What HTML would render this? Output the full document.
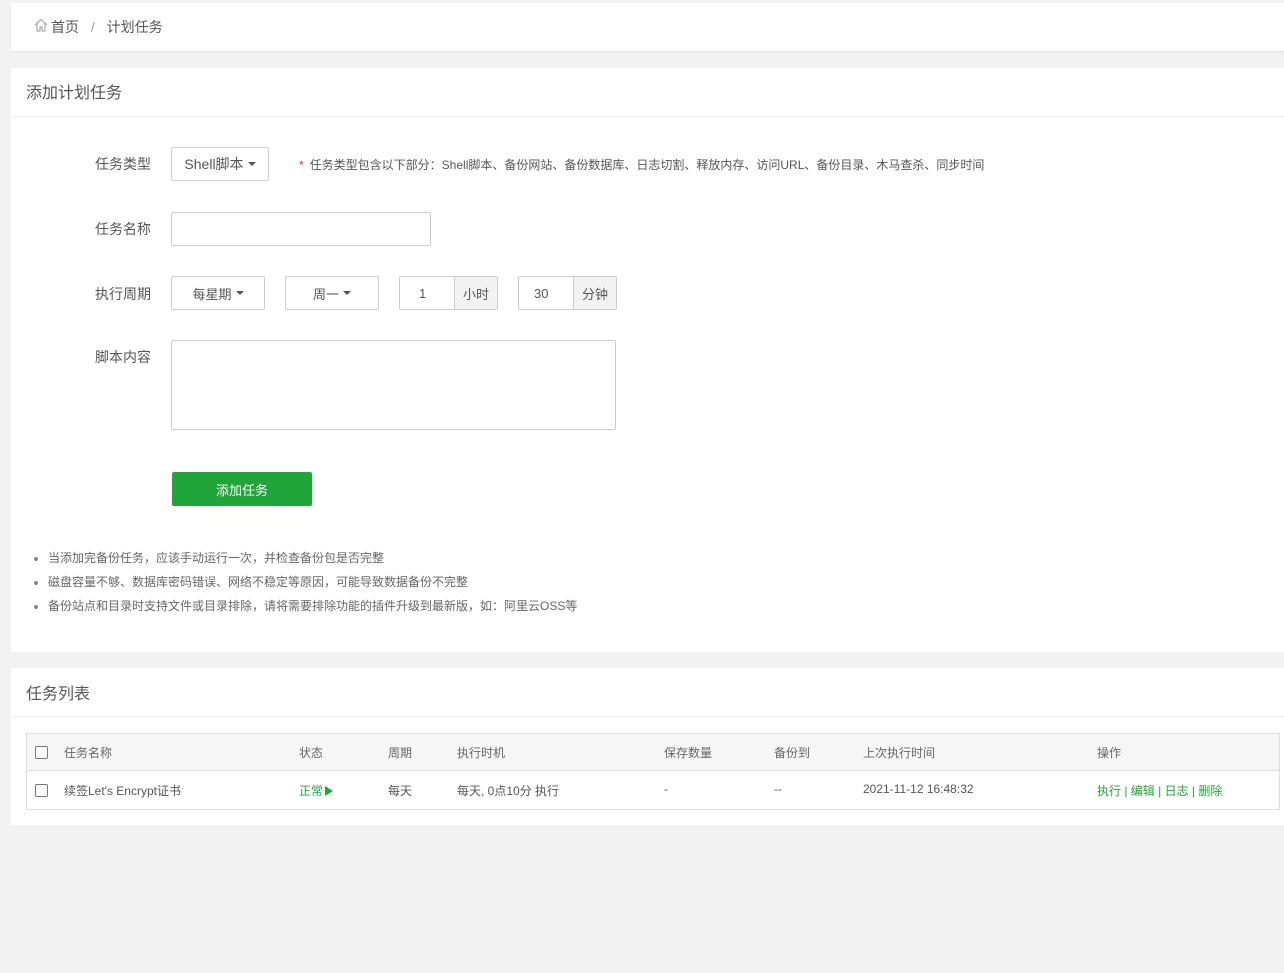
<!DOCTYPE html>
<html><head><meta charset="utf-8"><style>
*{box-sizing:border-box;margin:0;padding:0}
body{width:1284px;height:973px;background:#f2f2f2;font-family:"Liberation Sans","Noto Sans CJK SC",sans-serif;color:#555;position:relative;overflow:hidden;font-size:13px}
.a{position:absolute}
.card{position:absolute;left:11px;right:0;background:#fff}
.box{position:absolute;border:1px solid #ccc;border-radius:2px;background:#fff;display:flex;align-items:center;justify-content:center;font-size:13px;color:#555}
.caret{display:inline-block;width:0;height:0;border-left:4px solid transparent;border-right:4px solid transparent;border-top:4px solid #555;margin-left:4px;vertical-align:middle}
.lbl{position:absolute;left:95px;font-size:14px;color:#555}
.addon{background:#f2f2f2;border-left:1px solid #ccc}
li{list-style:none;position:relative;padding-left:22px;height:24px;line-height:24px;font-size:12px;color:#666}
li:before{content:"";position:absolute;left:8px;top:11px;width:4px;height:4px;border-radius:50%;background:#888}
.th{position:absolute;top:744px;font-size:12px;color:#666}
.td{position:absolute;top:782px;font-size:12px;color:#555}
.cb{position:absolute;left:35px;width:13px;height:13px;border:1px solid #777;border-radius:2px;background:#fff}
.g{color:#20a53a}
</style></head><body>
<div class="card" style="top:3px;height:48px;box-shadow:0 1px 2px rgba(0,0,0,.08)">
<svg class="a" style="left:23px;top:15px" width="14" height="14" viewBox="0 0 14 14" fill="none" stroke="#999" stroke-width="1"><path d="M1 7 7 1.5 13 7M3 5.5V13h3V9h2v4h3V5.5"/></svg>
<div class="a" style="left:40px;top:14px;font-size:14px;color:#555">首页 <span style="margin:0 8px;color:#999">/</span> 计划任务</div>
</div>
<div class="card" style="top:68px;height:584px">
<div class="a" style="left:0;right:0;top:0;height:49px;border-bottom:1px solid #eee"></div>
<div class="a" style="left:15px;top:11px;font-size:16px;color:#555">添加计划任务</div>
</div>
<div class="lbl" style="top:154px">任务类型</div>
<div class="box" style="left:171px;top:147px;width:98px;height:34px;font-size:14px">Shell脚本<span class="caret"></span></div>
<div class="a" style="left:299px;top:156px;font-size:12px;color:#555"><span style="color:#e33;margin-right:6px">*</span>任务类型包含以下部分：Shell脚本、备份网站、备份数据库、日志切割、释放内存、访问URL、备份目录、木马查杀、同步时间</div>
<div class="lbl" style="top:219px">任务名称</div>
<div class="box" style="left:171px;top:212px;width:260px;height:34px"></div>
<div class="lbl" style="top:284px">执行周期</div>
<div class="box" style="left:171px;top:276px;width:94px;height:34px">每星期<span class="caret"></span></div>
<div class="box" style="left:285px;top:276px;width:94px;height:34px">周一<span class="caret"></span></div>
<div class="box" style="left:399px;top:276px;width:99px;height:34px;justify-content:flex-start"><span style="width:54px;padding-left:19px">1</span><span class="addon" style="flex:1;height:100%;display:flex;align-items:center;justify-content:center">小时</span></div>
<div class="box" style="left:518px;top:276px;width:99px;height:34px;justify-content:flex-start"><span style="width:54px;padding-left:15px">30</span><span class="addon" style="flex:1;height:100%;display:flex;align-items:center;justify-content:center">分钟</span></div>
<div class="lbl" style="top:347px">脚本内容</div>
<div class="box" style="left:171px;top:340px;width:445px;height:90px"></div>
<div class="a" style="left:172px;top:472px;width:140px;height:34px;background:#20a53a;border-radius:2px;color:#fff;font-size:13px;display:flex;align-items:center;justify-content:center">添加任务</div>
<ul class="a" style="left:26px;top:546px">
<li>当添加完备份任务，应该手动运行一次，并检查备份包是否完整</li>
<li>磁盘容量不够、数据库密码错误、网络不稳定等原因，可能导致数据备份不完整</li>
<li>备份站点和目录时支持文件或目录排除，请将需要排除功能的插件升级到最新版，如：阿里云OSS等</li>
</ul>
<div class="card" style="top:668px;height:157px">
<div class="a" style="left:0;right:0;top:0;height:49px;border-bottom:1px solid #eee"></div>
<div class="a" style="left:15px;top:12px;font-size:16px;color:#555">任务列表</div>
</div>
<div class="a" style="left:26px;top:733px;width:1254px;height:77px;border:1px solid #ddd"></div>
<div class="a" style="left:27px;top:734px;width:1252px;height:37px;background:#f6f6f6;border-bottom:1px solid #ddd"></div>
<div class="cb" style="top:746px"></div>
<div class="th" style="left:64px">任务名称</div><div class="th" style="left:299px">状态</div><div class="th" style="left:388px">周期</div><div class="th" style="left:457px">执行时机</div><div class="th" style="left:664px">保存数量</div><div class="th" style="left:774px">备份到</div><div class="th" style="left:863px">上次执行时间</div><div class="th" style="left:1097px">操作</div>
<div class="cb" style="top:784px"></div>
<div class="td" style="left:64px">续签Let's Encrypt证书</div>
<div class="td g" style="left:299px">正常<span style="display:inline-block;width:0;height:0;border-top:5px solid transparent;border-bottom:5px solid transparent;border-left:8px solid #20a53a;margin-left:2px;vertical-align:-1px"></span></div>
<div class="td" style="left:388px">每天</div><div class="td" style="left:457px">每天, 0点10分 执行</div><div class="td" style="left:664px">-</div><div class="td" style="left:774px">--</div><div class="td" style="left:863px">2021-11-12 16:48:32</div>
<div class="td g" style="left:1097px">执行 | 编辑 | 日志 | 删除</div>
</body></html>
